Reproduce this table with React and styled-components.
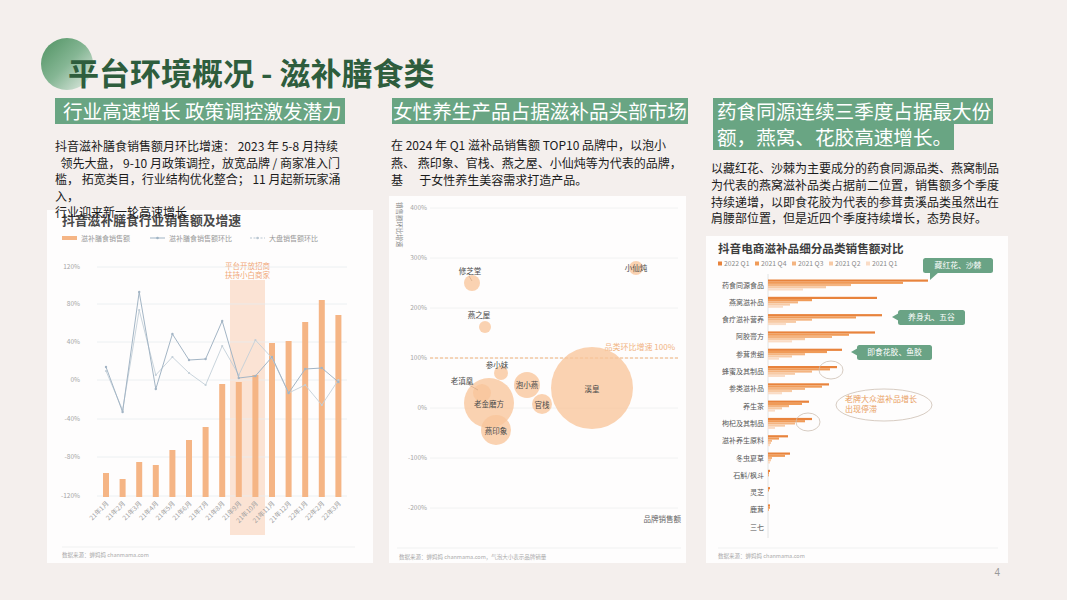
import React from 'react';
import styled, { createGlobalStyle } from 'styled-components';

const GlobalStyle = createGlobalStyle`
    html, body {
        margin: 0;
        padding: 0;
        background: #f4efed;
    }
    body {
        font-family: "Noto Sans CJK SC", "Noto Sans", sans-serif;
    }
    svg text {
        font-family: "Noto Sans CJK SC", "Noto Sans", sans-serif;
    }
`;

const Slide = styled.div`
    width: 1067px;
    height: 600px;
    overflow: hidden;
    background: #f4efed;
    display: flex;
    flex-direction: column;
`;

const TitleRow = styled.div`
    position: relative;
    margin-top: 52px;
    padding-left: 68px;
    height: 40px;
    &::before {
        content: '';
        position: absolute;
        left: 41px;
        top: -14px;
        width: 52px;
        height: 52px;
        border-radius: 50%;
        background: linear-gradient(135deg, #579769 8%, #85b694 50%, #dfe9e1 95%);
    }
`;

const Title = styled.h1`
    position: relative;
    margin: 0;
    font-size: 31px;
    line-height: 40px;
    font-weight: 700;
    color: #2e5d3d;
    white-space: nowrap;
`;

const Columns = styled.div`
    display: flex;
    align-items: flex-start;
    margin-top: 6px;
    padding-left: 47px;
`;

const Column = styled.div`
    width: ${(p) => p.$w}px;
    margin-left: ${(p) => p.$ml || 0}px;
    display: flex;
    flex-direction: column;
`;

const Heading = styled.div`
    margin-left: ${(p) => p.$indent}px;
    display: flex;
    flex-direction: column;
    align-items: flex-start;
`;

const HeadLine = styled.div`
    height: 26px;
    line-height: 26px;
    padding: 0 ${(p) => p.$pr || 0}px 0 ${(p) => p.$pl || 0}px;
    background: #69a583;
    color: #fff;
    font-size: 19.6px;
    white-space: nowrap;
`;

const Body = styled.div`
    position: relative;
    z-index: 1;
    margin: ${(p) => p.$mt}px 0 0 ${(p) => p.$ml}px;
    height: ${(p) => p.$h}px;
    font-size: 12px;
    line-height: ${(p) => p.$lh}px;
    color: #1b1b1b;
`;

const Line = styled.div`
    white-space: pre;
`;

const Card = styled.div`
    height: ${(p) => p.$h}px;
    background: #fefdfd;
`;

const Chart = styled.svg`
    display: block;
    width: 100%;
    height: 100%;
`;

const PageNum = styled.div`
    margin-top: 3px;
    padding-right: 67px;
    text-align: right;
    font-family: "Liberation Sans", sans-serif;
    font-size: 10px;
    line-height: 14px;
    color: #999;
`;

/* ---------- chart 1 : bars + lines ---------- */
const months = [
    '21年1月', '21年2月', '21年3月', '21年4月', '21年5月', '21年6月', '21年7月', '21年8月',
    '21年9月', '21年10月', '21年11月', '21年12月', '22年1月', '22年2月', '22年3月',
];
const barTops = [263, 269, 252, 255, 240, 230, 217, 174, 172, 165, 133, 131, 112, 90, 105];
const lineA = [157, 202, 82, 179, 124, 150, 149, 111, 168, 166, 147, 183, 159, 158, 172];
const lineB = [161, 200, 100, 165, 147, 163, 175, 136, 165, 130, 148, 183, 175, 195, 170];
const gridA = [
    ['120%', 57], ['80%', 94], ['40%', 132], ['0%', 170], ['-40%', 209], ['-80%', 247], ['-120%', 286],
];
const bx = (i) => 59 + i * 16.6;

function GrowthChart() {
    const ptsA = lineA.map((y, i) => `${bx(i)},${y}`).join(' ');
    const ptsB = lineB.map((y, i) => `${bx(i)},${y}`).join(' ');
    return (
        <Chart viewBox="0 0 326 353">
            <text x="15" y="15" fontSize="12.8" fontWeight="700" fill="#4a4a4a">
                抖音滋补膳食行业销售额及增速
            </text>
            <rect x="15" y="26" width="15" height="4" fill="#f5b585" />
            <text x="34" y="30.5" fontSize="7" fill="#999">滋补膳食销售额</text>
            <line x1="103" y1="28" x2="118" y2="28" stroke="#9fb3c4" strokeWidth="1" />
            <circle cx="110.5" cy="28" r="1.3" fill="#9fb3c4" />
            <text x="122" y="30.5" fontSize="7" fill="#999">滋补膳食销售额环比</text>
            <line x1="203" y1="28" x2="218" y2="28" stroke="#b9c7d2" strokeWidth="1" strokeDasharray="2 1.5" />
            <circle cx="210.5" cy="28" r="1.3" fill="#b9c7d2" />
            <text x="222" y="30.5" fontSize="7" fill="#999">大盘销售额环比</text>

            <rect x="183" y="70" width="35" height="255" fill="#fbe3d4" />
            <text x="200.5" y="59" fontSize="7.5" fill="#f1a878" textAnchor="middle">平台开放招商</text>
            <text x="200.5" y="68" fontSize="7.5" fill="#f1a878" textAnchor="middle">扶持小白商家</text>

            {gridA.map(([label, y]) => (
                <g key={label}>
                    <line x1="50" y1={y} x2="300" y2={y} stroke="#e9ecef" strokeWidth="0.8" />
                    <text x="33" y={y + 2.3} fontSize="6.5" fill="#a5a5a5" textAnchor="end">{label}</text>
                </g>
            ))}

            {barTops.map((top, i) => (
                <rect key={i} x={bx(i) - 3} y={top} width="6" height={287 - top} fill="#f5b585" />
            ))}

            <polyline points={ptsB} fill="none" stroke="#c3cfd8" strokeWidth="0.9" />
            {lineB.map((y, i) => (
                <circle key={i} cx={bx(i)} cy={y} r="1.1" fill="#c3cfd8" />
            ))}
            <polyline points={ptsA} fill="none" stroke="#a3b5c5" strokeWidth="1" />
            {lineA.map((y, i) => (
                <circle key={i} cx={bx(i)} cy={y} r="1.2" fill="#a3b5c5" />
            ))}

            {months.map((m, i) => (
                <text
                    key={m}
                    x={bx(i) + 3}
                    y="294"
                    fontSize="6.5"
                    fill="#a0a0a0"
                    textAnchor="end"
                    transform={`rotate(-45 ${bx(i) + 3} 294)`}
                >
                    {m}
                </text>
            ))}

            <line x1="15" y1="337" x2="308" y2="337" stroke="#eeeeee" strokeWidth="0.8" />
            <text x="15" y="347" fontSize="5.5" fill="#aaa">数据来源：蝉妈妈 chanmama.com</text>
        </Chart>
    );
}

/* ---------- chart 2 : bubbles ---------- */
const gridB = [
    ['400%', 12], ['300%', 62], ['200%', 112], ['100%', 162], ['0%', 212], ['-100%', 262], ['-200%', 312],
];
const bubbles = [
    { cx: 203, cy: 192, r: 41 },
    { cx: 100, cy: 207, r: 25 },
    { cx: 107, cy: 234, r: 15 },
    { cx: 93, cy: 197, r: 9 },
    { cx: 138, cy: 189, r: 13 },
    { cx: 153, cy: 208, r: 10 },
    { cx: 112, cy: 177, r: 7 },
    { cx: 96, cy: 131, r: 6 },
    { cx: 83, cy: 87, r: 8 },
    { cx: 247, cy: 72, r: 7 },
];
const brandLabels = [
    ['修芝堂', 81, 75],
    ['小仙炖', 247, 72],
    ['燕之屋', 90, 119],
    ['参小妹', 108, 169],
    ['老滇凰', 73, 185],
    ['老金磨方', 100, 208],
    ['燕印象', 107, 235],
    ['泡小燕', 138, 189],
    ['官栈', 153, 209],
    ['溪皇', 203, 193],
];

function BubbleChart() {
    return (
        <Chart viewBox="0 0 297 367">
            <text x="8" y="6" fontSize="6.5" fill="#888" transform="rotate(90 8 6)">销售额环比增速</text>
            {gridB.map(([label, y]) => (
                <g key={label}>
                    <line x1="41" y1={y} x2="289" y2={y} stroke="#efefef" strokeWidth="0.8" />
                    <text x="38" y={y + 2.3} fontSize="6.5" fill="#a5a5a5" textAnchor="end">{label}</text>
                </g>
            ))}
            <line x1="41" y1="162" x2="289" y2="162" stroke="#f2b27a" strokeWidth="1" strokeDasharray="3 2" />
            <text x="286" y="154" fontSize="8" fill="#f1b483" textAnchor="end">品类环比增速    100%</text>
            {bubbles.map((b, i) => (
                <circle key={i} cx={b.cx} cy={b.cy} r={b.r} fill="#f8c59b" fillOpacity="0.78" />
            ))}
            <line x1="80" y1="80" x2="83" y2="85" stroke="#c79a78" strokeWidth="0.5" />
            <line x1="80" y1="189" x2="89" y2="194" stroke="#c79a78" strokeWidth="0.5" />
            {brandLabels.map(([t, x, y]) => (
                <text key={t} x={x} y={y + 2.8} fontSize="7.5" fill="#4a4a4a" textAnchor="middle">{t}</text>
            ))}
            <text x="292" y="326" fontSize="7.5" fill="#666" textAnchor="end">品牌销售额</text>
            <line x1="8" y1="352" x2="292" y2="352" stroke="#eeeeee" strokeWidth="0.8" />
            <text x="10" y="363" fontSize="5.5" fill="#aaa">数据来源：蝉妈妈 chanmama.com，气泡大小表示品牌销量</text>
        </Chart>
    );
}

/* ---------- chart 3 : horizontal bars ---------- */
const quarterColors = ['#e8833c', '#f09b58', '#f4b480', '#f7caa5', '#fadcc6'];
const quarterNames = ['2022 Q1', '2021 Q4', '2021 Q3', '2021 Q2', '2021 Q1'];
const categories = [
    ['药食同源食品', [160, 135, 83, 58, 35]],
    ['燕窝滋补品', [109, 44, 30, 22, 15]],
    ['食疗滋补营养', [114, 88, 44, 28, 18]],
    ['阿胶膏方', [107, 81, 64, 37, 24]],
    ['参茸贵细', [74, 59, 37, 24, 11]],
    ['蜂蜜及其制品', [69, 62, 44, 27, 17]],
    ['参类滋补品', [61, 54, 37, 24, 14]],
    ['养生茶', [41, 34, 21, 14, 7]],
    ['枸杞及其制品', [44, 37, 27, 17, 7]],
    ['滋补养生原料', [20, 11, 4, 3, 2]],
    ['冬虫夏草', [22, 17, 4, 3, 2]],
    ['石斛/枫斗', [2, 1, 1, 0, 0]],
    ['灵芝', [2, 1, 0, 0, 0]],
    ['鹿茸', [2, 2, 1, 0, 0]],
    ['三七', [0, 0, 0, 0, 0]],
];
const rowY = (i) => 49 + i * 17.3;

function Callout({ x, y, w, children, tail }) {
    return (
        <g>
            <rect x={x} y={y} width={w} height="15" rx="2.5" fill="#6aa385" />
            <polygon points={tail} fill="#6aa385" />
            <text x={x + w / 2} y={y + 10.3} fontSize="7.8" fill="#fff" textAnchor="middle">{children}</text>
        </g>
    );
}

function CategoryChart() {
    return (
        <Chart viewBox="0 0 302 327">
            <text x="12" y="17" fontSize="11.6" fontWeight="700" fill="#3d3d3d">抖音电商滋补品细分品类销售额对比</text>
            {quarterNames.map((q, i) => (
                <g key={q}>
                    <rect x={12 + i * 37} y="25.5" width="4" height="4" fill={quarterColors[i]} />
                    <text x={18 + i * 37} y="30.3" fontSize="6.8" fill="#8a8a8a">{q}</text>
                </g>
            ))}
            <line x1="62" y1="38" x2="62" y2="302" stroke="#dddddd" strokeWidth="0.8" />
            {categories.map(([name, vals], i) => (
                <g key={name}>
                    <text x="58" y={rowY(i) + 2.5} fontSize="7" fill="#555" textAnchor="end">{name}</text>
                    {vals.map((v, j) =>
                        v > 0 ? (
                            <rect
                                key={j}
                                x="62"
                                y={rowY(i) - 5.5 + j * 2.2}
                                width={v}
                                height="2.2"
                                fill={quarterColors[j]}
                            />
                        ) : null
                    )}
                </g>
            ))}

            <Callout x={217} y={22} w={70} tail="224,36 233,36 224,44">藏红花、沙棘</Callout>
            <Callout x={192} y={74} w={67} tail="193,77 193,85 186,81">养身丸、五谷</Callout>
            <Callout x={151} y={109} w={75} tail="152,112 152,120 145,116">即食花胶、鱼胶</Callout>

            <ellipse cx="125" cy="134" rx="12" ry="9" fill="none" stroke="#cdbfb2" strokeWidth="0.8" />
            <ellipse cx="102" cy="186" rx="12" ry="9" fill="none" stroke="#cdbfb2" strokeWidth="0.8" />
            <ellipse cx="178" cy="169" rx="48" ry="16" fill="none" stroke="#cdbfb2" strokeWidth="0.8" />
            <text x="139" y="166" fontSize="8" fill="#e9a062">老牌大众滋补品增长</text>
            <text x="139" y="176" fontSize="8" fill="#e9a062">出现停滞</text>

            <line x1="12" y1="312" x2="292" y2="312" stroke="#eeeeee" strokeWidth="0.8" />
            <text x="12" y="322" fontSize="5.5" fill="#aaa">数据来源：蝉妈妈 chanmama.com</text>
        </Chart>
    );
}

export default function App() {
    return (
        <Slide>
            <GlobalStyle />
            <TitleRow>
                <Title>平台环境概况 - 滋补膳食类</Title>
            </TitleRow>
            <Columns>
                <Column $w={326}>
                    <Heading $indent={8}>
                        <HeadLine $pl={8} $pr={3}>行业高速增长 政策调控激发潜力</HeadLine>
                    </Heading>
                    <Body $mt={14} $ml={8} $h={72} $lh={16.5}>
                        <Line>抖音滋补膳食销售额月环比增速： 2023 年 5-8 月持续</Line>
                        <Line>  领先大盘， 9-10 月政策调控，放宽品牌 / 商家准入门</Line>
                        <Line>槛， 拓宽类目，行业结构优化整合； 11 月起新玩家涌</Line>
                        <Line>入，</Line>
                        <Line>行业迎来新一轮高速增长</Line>
                    </Body>
                    <Card $h={353}>
                        <GrowthChart />
                    </Card>
                </Column>
                <Column $w={297} $ml={16}>
                    <Heading $indent={3}>
                        <HeadLine $pl={1} $pr={1}>女性养生产品占据滋补品头部市场</HeadLine>
                    </Heading>
                    <Body $mt={12} $ml={2} $h={60} $lh={17.5}>
                        <Line>在 2024 年 Q1 滋补品销售额 TOP10 品牌中，以泡小</Line>
                        <Line>燕、 燕印象、官栈、燕之屋、小仙炖等为代表的品牌，</Line>
                        <Line>基      于女性养生美容需求打造产品。</Line>
                    </Body>
                    <Card $h={367}>
                        <BubbleChart />
                    </Card>
                </Column>
                <Column $w={302} $ml={20}>
                    <Heading $indent={7}>
                        <HeadLine $pl={4} $pr={2}>药食同源连续三季度占据最大份</HeadLine>
                        <HeadLine $pl={4} $pr={2}>额，燕窝、花胶高速增长。</HeadLine>
                    </Heading>
                    <Body $mt={10} $ml={5} $h={76} $lh={16.8}>
                        <Line>以藏红花、沙棘为主要成分的药食同源品类、燕窝制品</Line>
                        <Line>为代表的燕窝滋补品类占据前二位置，销售额多个季度</Line>
                        <Line>持续递增，以即食花胶为代表的参茸贵溪品类虽然出在</Line>
                        <Line>肩腰部位置，但是近四个季度持续增长，态势良好。</Line>
                    </Body>
                    <Card $h={327}>
                        <CategoryChart />
                    </Card>
                </Column>
            </Columns>
            <PageNum>4</PageNum>
        </Slide>
    );
}
